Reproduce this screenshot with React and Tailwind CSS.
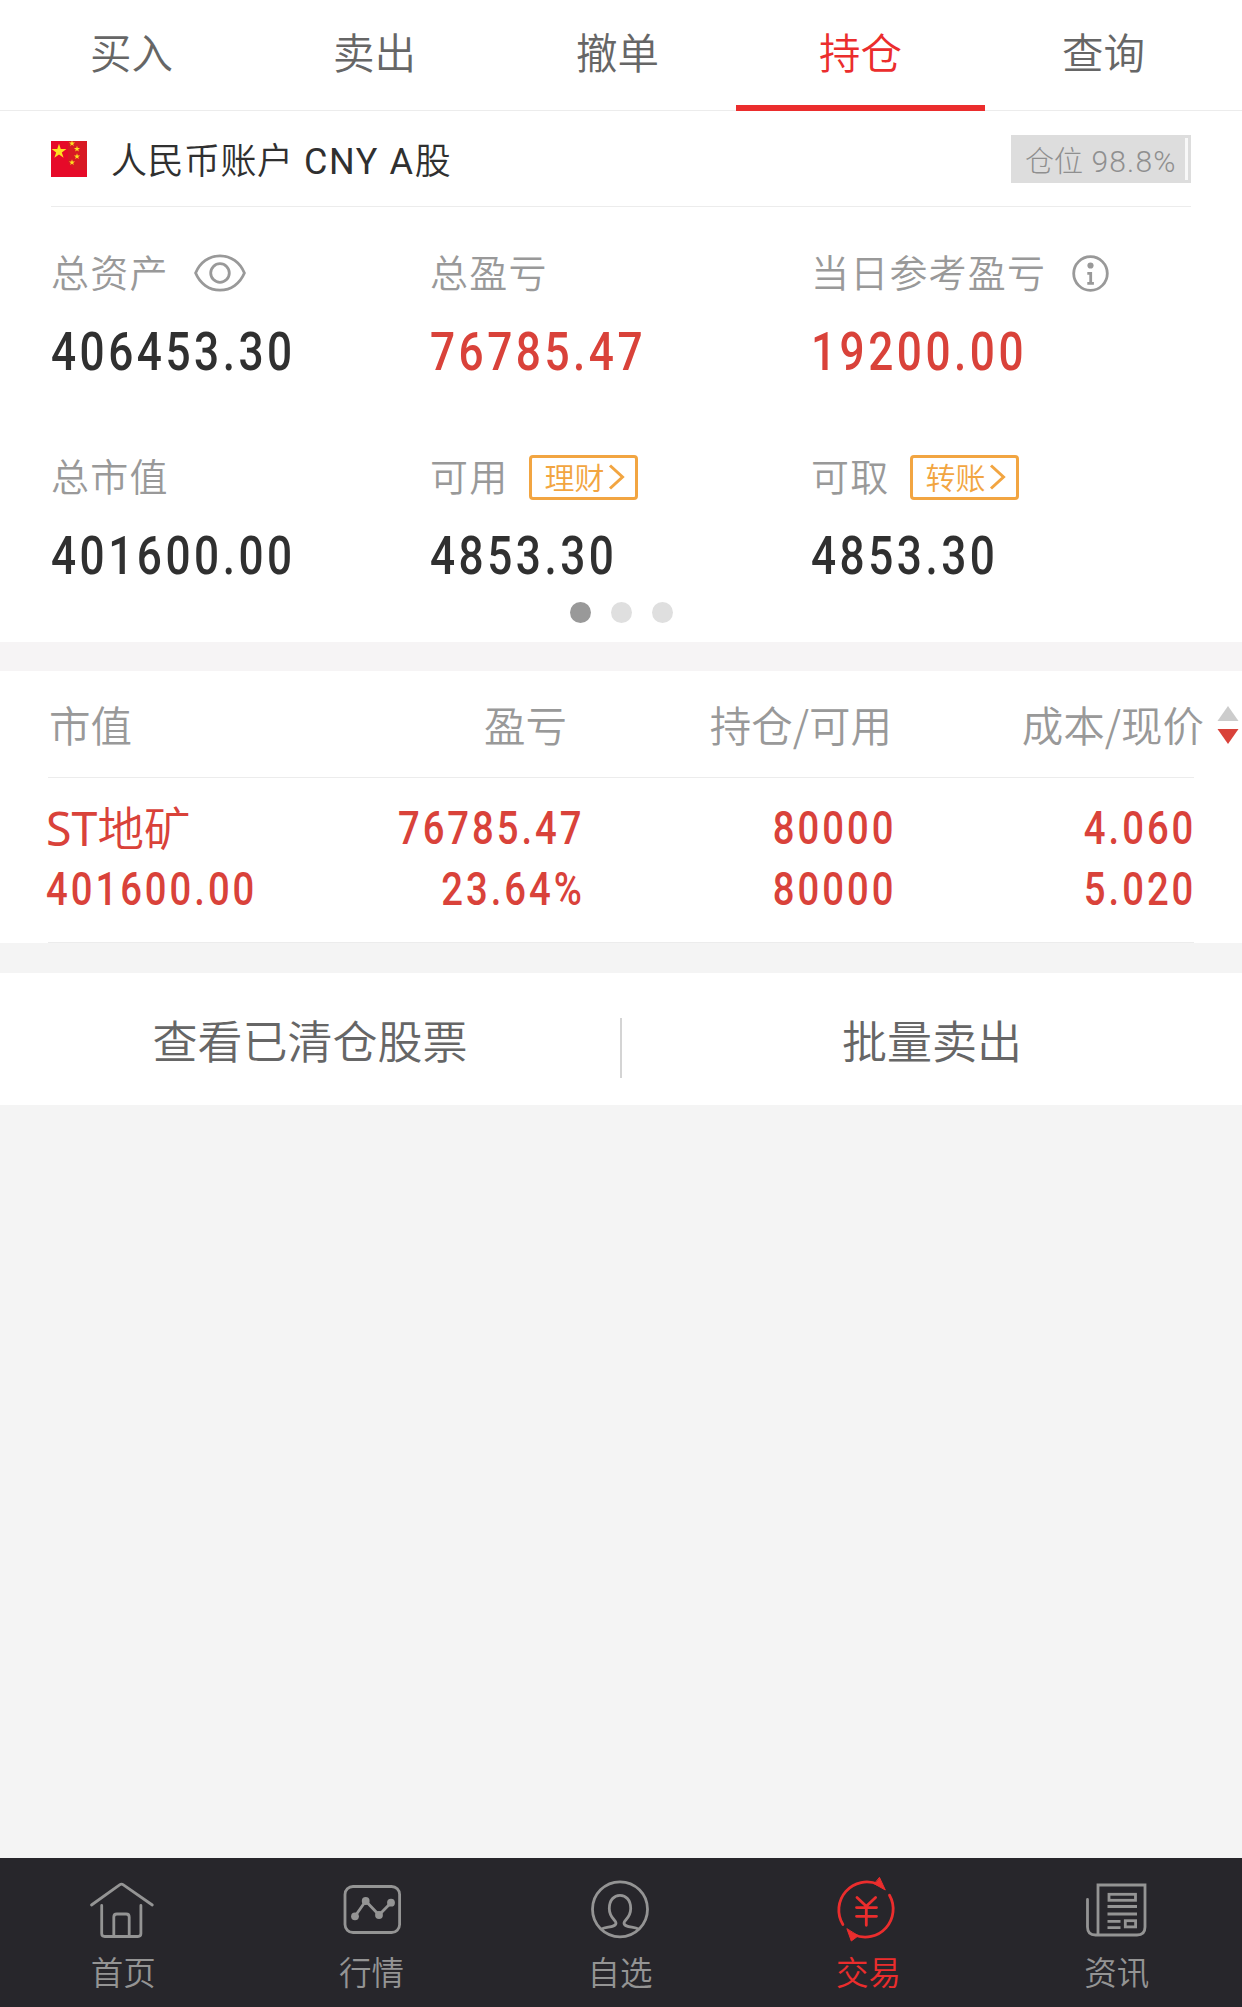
import { useState } from "react";
import clsx from "clsx";

const TABS = ["买入", "卖出", "撤单", "持仓", "查询"];

const SUMMARY = [
  { label: "总资产", value: "406453.30", icon: "eye" },
  { label: "总盈亏", value: "76785.47", up: true },
  { label: "当日参考盈亏", value: "19200.00", up: true, icon: "info" },
  { label: "总市值", value: "401600.00" },
  { label: "可用", value: "4853.30", action: "理财" },
  { label: "可取", value: "4853.30", action: "转账" },
];

const HOLDINGS = [
  {
    flag: "ST",
    name: "地矿",
    marketValue: "401600.00",
    profit: "76785.47",
    profitRate: "23.64%",
    amount: "80000",
    available: "80000",
    cost: "4.060",
    price: "5.020",
  },
];

const NAV = [
  { label: "首页", Icon: HomeIcon },
  { label: "行情", Icon: ChartIcon },
  { label: "自选", Icon: UserIcon },
  { label: "交易", Icon: TradeIcon },
  { label: "资讯", Icon: NewsIcon },
];

function NavSvg({ children }) {
  return (
    <svg
      viewBox="0 0 64 64"
      className="w-16 h-16 overflow-visible"
      fill="none"
      stroke="currentColor"
      strokeWidth="2.8"
      strokeLinecap="round"
      strokeLinejoin="round"
    >
      {children}
    </svg>
  );
}

function HomeIcon() {
  return (
    <NavSvg>
      <path d="M-.5 27 27.6 6.8q1.9-1.3 3.8 0L60.3 27" />
      <path d="M9.7 27.5v28q0 3 3 3h33.2q3 0 3-3v-28" />
      <path d="M21.8 58.5V39q0-3 3-3h9.4q3 0 3 3v19.5" />
    </NavSvg>
  );
}

function ChartIcon() {
  return (
    <NavSvg>
      <rect x="4" y="8.5" width="54.6" height="46" rx="8" />
      <path d="m14 38.3 10.7-15.3L38 37l12-12.3" />
      <g fill="currentColor" stroke="none">
        <circle cx="14" cy="38.3" r="3.9" />
        <circle cx="24.7" cy="23" r="3.9" />
        <circle cx="38" cy="37" r="3.9" />
        <circle cx="50" cy="24.7" r="3.9" />
      </g>
    </NavSvg>
  );
}

function UserIcon() {
  return (
    <NavSvg>
      <circle cx="31" cy="31.3" r="27.5" />
      <path d="M12.7 51C17 48.5 27 49.5 27 45c0-3-6.7-5-6.7-14.5C20.3 22 25 17.3 31 17.3S41.7 22 41.7 30.5C41.7 40 35 42 35 45c0 4.5 10 3.5 14.3 6" />
    </NavSvg>
  );
}

function TradeIcon() {
  return (
    <NavSvg>
      <path d="M5.9 46.5A28 28 0 0 1 41.5 6.5M52.5 17.3A28 28 0 0 1 17 56.8" />
      <path
        d="M42.6-.3 48.3 12 37.6 6ZM10 51l4.3 12L21 58Z"
        fill="currentColor"
        strokeWidth="1"
      />
      <path d="m20 19.5 9.3 8.8 9.3-8.8M29.3 28.3v19M19.5 29.6h20M19.5 38.3h20" />
    </NavSvg>
  );
}

function NewsIcon() {
  return (
    <NavSvg>
      <path
        d="M1.5 21.5v27.5q0 8 8 8h41.5q8 0 8-8V7H12v50"
        strokeLinejoin="miter"
      />
      <g strokeLinecap="butt" strokeLinejoin="miter">
        <rect x="23" y="16.3" width="26.5" height="6" />
        <path d="M21.5 28.5H51M21.5 36H51M21.5 43.3h13M21.5 49.6h13" />
        <rect x="39.3" y="42.7" width="10.3" height="6.2" />
      </g>
    </NavSvg>
  );
}

function EyeIcon() {
  return (
    <svg
      width="52"
      height="38"
      viewBox="0 0 52 38"
      fill="none"
      stroke="#999"
      strokeWidth="2.8"
    >
      <path d="M1.6 19C6 8.5 15 1.8 26 1.8S46 8.5 50.4 19C46 29.5 37 36.2 26 36.2S6 29.5 1.6 19Z" />
      <circle cx="26" cy="19" r="9.3" />
    </svg>
  );
}

function InfoIcon() {
  return (
    <svg
      width="37"
      height="37"
      viewBox="0 0 37 37"
      fill="none"
      stroke="#999"
      strokeWidth="2.8"
    >
      <circle cx="18.5" cy="18.5" r="16.8" />
      <circle cx="18.5" cy="10.5" r="3.1" fill="#999" stroke="none" />
      <path d="M15.3 18.3h3.4v10M15.3 28.3h6.6" />
    </svg>
  );
}

function FlagIcon() {
  const star =
    "M0-1 .225-.309H.951L.363.118.588.809 0 .382-.588.809-.363.118-.951-.309H-.225Z";
  return (
    <svg width="36" height="36" viewBox="0 0 36 36">
      <rect width="36" height="36" fill="#e60a29" />
      <path d="M17 0h19v29H24L17 22Z" fill="#d81923" />
      <g fill="#fde021">
        <path d={star} transform="translate(8 10.5) scale(7.8)" />
        <path d={star} transform="translate(21 2.5) scale(3.2)" />
        <path d={star} transform="translate(26 8) scale(3.2)" />
        <path d={star} transform="translate(26 15.5) scale(3.2)" />
        <path d={star} transform="translate(21 21.5) scale(3.2)" />
      </g>
    </svg>
  );
}

// Narrow figures with a bit of extra tracking
function Figure({ children, className }) {
  return (
    <span
      className={clsx(
        "block w-max font-[Roboto,sans-serif] font-medium scale-x-85 scale-y-102",
        className,
      )}
    >
      {children}
    </span>
  );
}

function SummaryItem({ item }) {
  return (
    <div>
      <div className="flex items-center h-12">
        <span className="text-[38px] leading-12 -mt-[4px] tracking-[1.2px] font-[350] text-[#999]">
          {item.label}
        </span>
        {item.icon === "eye" && (
          <span className="ml-[25px] -mt-px">
            <EyeIcon />
          </span>
        )}
        {item.icon === "info" && (
          <span className="ml-[26px]">
            <InfoIcon />
          </span>
        )}
        {item.action && (
          <button className="ml-[21px] w-[109px] h-[45px] border-3 border-[#f2a541] rounded-[4px] pl-[12px] flex items-center text-[#f2a541] text-[30px] leading-none font-[350]">
            <span className="-mt-[3px]">{item.action}</span>
            <svg
              width="18"
              height="26"
              viewBox="0 0 18 26"
              className="ml-1"
              fill="none"
              stroke="currentColor"
              strokeWidth="3"
            >
              <path d="m2 1.5 12.5 11.5L2 24.5" />
            </svg>
          </button>
        )}
      </div>
      <Figure
        className={clsx(
          "mt-6 text-[52px] leading-[64px] -mb-[2px] tracking-[4.1px] origin-left",
          item.up ? "text-[#d9423a]" : "text-[#303030]",
        )}
      >
        {item.value}
      </Figure>
    </div>
  );
}

function Cell({ top, bottom }) {
  return (
    <div className="flex flex-col items-end">
      <Figure className="text-[45px] leading-[61px] tracking-[3.5px] origin-right">
        {top}
      </Figure>
      <Figure className="text-[45px] leading-[61px] tracking-[3.5px] origin-right">
        {bottom}
      </Figure>
    </div>
  );
}

export default function App() {
  const [tab, setTab] = useState("持仓");
  const [page, setPage] = useState(0);

  return (
    <div className="w-[1242px] h-[2007px] flex flex-col bg-[#f4f4f4] font-['Noto_Sans_CJK_SC',sans-serif] whitespace-nowrap overflow-hidden">
      <div className="bg-white h-[642px]">
        <div className="h-[111px] px-[10px] flex border-b border-[#ececec]">
          {TABS.map((name) => (
            <button
              key={name}
              onClick={() => setTab(name)}
              className={clsx(
                "relative w-[243px] h-[110px] pb-[7px] text-[41.5px] font-[350]",
                name === tab ? "text-[#eb2d2d]" : "text-[#666]",
              )}
            >
              {name}
              {name === tab && (
                <span className="absolute -left-[3px] -bottom-px w-[249px] h-[6px] bg-[#eb2d2d]" />
              )}
            </button>
          ))}
        </div>

        <div className="mx-[51px] h-24 flex items-center border-b border-[#ececec]">
          <FlagIcon />
          <span className="ml-6 mt-[2px] text-[36px] tracking-[0.5px] font-[350] text-[#303030]">
            人民币账户{" "}
            <span className="ml-[2px] font-[Roboto,sans-serif] font-normal tracking-[1.6px]">
              CNY A
            </span>
            股
          </span>
          <div className="ml-auto w-[180px] h-12 bg-[#ddd] pl-[14px] pr-[3px] flex items-center justify-between">
            <span className="mt-[4px] text-[29px] font-light text-[#8f8f8f]">
              仓位{" "}
              <span className="ml-[2px] font-[Roboto,sans-serif] text-[30px] tracking-[1.2px]">
                98.8%
              </span>
            </span>
            <span className="w-[3px] h-[42px] bg-[#f8f8f8]" />
          </div>
        </div>

        <div className="ml-[51px] mt-[42px] grid grid-cols-[379px_381px_1fr] gap-y-[70px]">
          {SUMMARY.map((item) => (
            <SummaryItem key={item.label} item={item} />
          ))}
        </div>

        <div className="mt-[15px] flex justify-center gap-5">
          {[0, 1, 2].map((i) => (
            <button
              key={i}
              onClick={() => setPage(i)}
              className={clsx(
                "w-[21px] h-[21px] rounded-full",
                i === page ? "bg-[#999]" : "bg-[#dfdfdf]",
              )}
            />
          ))}
        </div>
      </div>

      <div className="h-[29px] bg-[#f6f4f5]" />

      <div className="bg-white h-[272px]">
        <div className="ml-[49px] w-[1193px] h-[106px] flex items-center text-[41.5px] font-[350] text-[#999]">
          <span className="w-[199px]">市值</span>
          <span className="w-[319px] text-right">盈亏</span>
          <span className="w-[325px] text-right">持仓/可用</span>
          <span className="w-[312px] text-right">成本/现价</span>
          <svg
            width="22"
            height="38"
            viewBox="0 0 22 38"
            className="ml-[13px] mt-[2px]"
          >
            <path d="M11 0 21.5 15H.5Z" fill="#ccc" />
            <path d="M.5 23h21L11 38Z" fill="#d9423a" />
          </svg>
        </div>
        <div className="mx-[48px] h-px bg-[#ececec]" />
        {HOLDINGS.map((stock) => (
          <div
            key={stock.name}
            className="ml-[48px] w-[1146px] h-[165px] pt-5 border-b border-[#ececec] text-[#d9423a]"
          >
            <div className="-ml-[2px] w-[1151px] grid grid-cols-[220px_319px_311px_300px]">
              <div>
                <p className="text-[46.5px] leading-[61px] h-[61px] -mt-[3px] mb-[3px] font-[350]">
                  <span className="font-['Noto_Sans',sans-serif] font-normal">
                    {stock.flag}
                  </span>
                  {stock.name}
                </p>
                <Figure className="text-[45px] leading-[61px] tracking-[3.5px] origin-left">
                  {stock.marketValue}
                </Figure>
              </div>
              <Cell top={stock.profit} bottom={stock.profitRate} />
              <Cell top={stock.amount} bottom={stock.available} />
              <Cell top={stock.cost} bottom={stock.price} />
            </div>
          </div>
        ))}
      </div>

      <div className="mt-[30px] h-[132px] bg-white flex items-center text-[45px] font-[350] text-[#666]">
        <button className="flex-1 mt-px">查看已清仓股票</button>
        <span className="w-[2px] h-[60px] mt-[18px] bg-[#d4d4d4]" />
        <button className="flex-1 mt-px">批量卖出</button>
      </div>

      <nav className="mt-auto h-[149px] pt-5 bg-[#27262b] grid grid-cols-5">
        {NAV.map(({ label, Icon }) => (
          <div
            key={label}
            className={clsx(
              "flex flex-col items-center",
              label === "交易" ? "text-[#eb2d2d]" : "text-[#949494]",
            )}
          >
            <Icon />
            <span className="mt-[5px] mr-[2px] text-[32.5px] leading-12 font-[350]">
              {label}
            </span>
          </div>
        ))}
      </nav>
    </div>
  );
}
